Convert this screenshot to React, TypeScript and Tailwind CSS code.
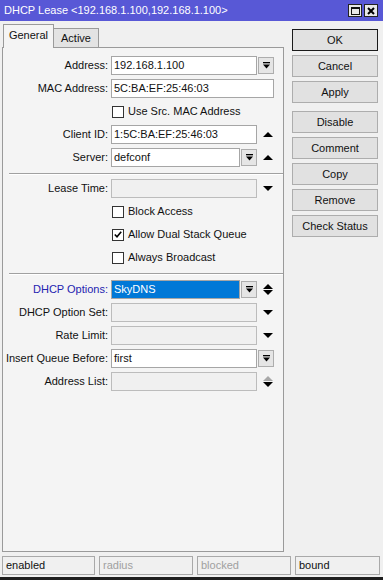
import React from 'react';

type ArrowKind = 'up' | 'down' | 'updown' | 'updownGray';

function Arrow({ kind }: { kind: ArrowKind }) {
  return (
    <div className="ml-[4px] flex w-[14px] justify-center">
      {kind === 'up' && (
        <svg width="10" height="5" viewBox="0 0 10 5">
          <polygon points="0,5 5,0 10,5" fill="#000" />
        </svg>
      )}
      {kind === 'down' && (
        <svg width="10" height="5" viewBox="0 0 10 5">
          <polygon points="0,0 10,0 5,5" fill="#000" />
        </svg>
      )}
      {(kind === 'updown' || kind === 'updownGray') && (
        <svg width="10" height="11" viewBox="0 0 10 11">
          <polygon points="0,5 5,0 10,5" fill={kind === 'updownGray' ? '#a8a8a8' : '#000'} />
          <polygon points="0,6 10,6 5,11" fill="#000" />
        </svg>
      )}
    </div>
  );
}

function DropBtn() {
  return (
    <div className="ml-[1px] flex h-[17px] w-[16px] items-center justify-center border border-[#adadad] bg-[#e5e5e5]">
      <svg width="7" height="7" viewBox="0 0 7 7">
        <rect x="0" y="0" width="7" height="1.3" fill="#000" />
        <polygon points="0,2.5 7,2.5 3.5,6.5" fill="#000" />
      </svg>
    </div>
  );
}

function Field({
  w,
  value,
  disabled,
  selected,
}: {
  w: string;
  value?: string;
  disabled?: boolean;
  selected?: boolean;
}) {
  return (
    <div
      className={`${w} h-[19px] border ${
        disabled ? 'border-[#bcbcbc] bg-[#f0f0f0]' : 'border-[#a6a6a6] bg-white'
      }`}
    >
      <div
        className={`h-full px-[2px] leading-[17px] ${selected ? 'bg-[#0078d7] text-white' : ''}`}
      >
        {value}
      </div>
    </div>
  );
}

function Row({ label, blue, children }: { label: string; blue?: boolean; children: React.ReactNode }) {
  return (
    <div className="flex h-[19px] items-center">
      <div className={`w-[105px] whitespace-nowrap text-right ${blue ? 'text-[#2323b0]' : ''}`}>{label}</div>
      <div className="ml-[3px] flex items-center">{children}</div>
    </div>
  );
}

function Check({ label, checked }: { label: string; checked?: boolean }) {
  return (
    <div className="flex h-[19px] items-center pl-[109px]">
      <div className="flex h-[12px] w-[12px] items-center justify-center border border-[#333] bg-white">
        {checked && (
          <svg width="8" height="7" viewBox="0 0 8 7">
            <polyline points="0.8,3.5 3,5.8 7.2,0.8" fill="none" stroke="#000" strokeWidth="1.6" />
          </svg>
        )}
      </div>
      <span className="ml-[4px]">{label}</span>
    </div>
  );
}

function Separator() {
  return <div className="ml-[6px] border-t border-b border-t-[#a0a0a0] border-b-white" />;
}

function SideButton({ label, primary }: { label: string; primary?: boolean }) {
  return (
    <div
      className={`flex h-[22px] items-center justify-center border bg-[#e1e1e1] ${
        primary ? 'border-[#1a1a1a]' : 'border-[#adadad]'
      }`}
    >
      {label}
    </div>
  );
}

export default function App() {
  return (
    <div className="flex h-[580px] w-[383px] flex-col bg-[#f0f0f0] font-['Liberation_Sans',Arial,sans-serif] text-[11px] text-[#111]">
      {/* title bar */}
      <div className="flex h-[21px] items-center bg-[#5858d6] pl-[4px] pr-[5px]">
        <span className="text-[11px] text-white">DHCP Lease &lt;192.168.1.100,192.168.1.100&gt;</span>
        <div className="ml-auto flex gap-[2px]">
          <div className="flex h-[13px] w-[14px] items-center justify-center border border-[#222] bg-[#e8e8e8]">
            <div className="h-[8px] w-[9px] border border-[#111] border-t-2" />
          </div>
          <div className="flex h-[13px] w-[14px] items-center justify-center border border-[#222] bg-[#e8e8e8]">
            <svg width="8" height="8" viewBox="0 0 8 8">
              <path d="M1 1 L7 7 M7 1 L1 7" stroke="#000" strokeWidth="2" />
            </svg>
          </div>
        </div>
      </div>

      {/* body */}
      <div className="flex pl-[2px] pt-[3px]">
        <div className="flex w-[282px] flex-col">
          <div className="flex h-[23px] items-end pl-[1px]">
            <div className="relative z-10 -mb-px flex h-[24px] w-[51px] items-center justify-center border border-b-0 border-[#9a9a9a] bg-[#f4f4f4] pb-[2px]">
              General
            </div>
            <div className="flex h-[19px] w-[45px] items-center justify-center border border-b-0 border-l-0 border-[#9a9a9a] bg-[#e3e3e3]">
              Active
            </div>
          </div>
          <div className="flex h-[505px] flex-col border border-[#9a9a9a] bg-[#f4f4f4] pt-[8px]">
            <div className="flex flex-col gap-[4px]">
              <Row label="Address:">
                <Field w="w-[146px]" value="192.168.1.100" />
                <DropBtn />
              </Row>
              <Row label="MAC Address:">
                <Field w="w-[163px]" value="5C:BA:EF:25:46:03" />
              </Row>
              <Check label="Use Src. MAC Address" />
              <Row label="Client ID:">
                <Field w="w-[146px]" value="1:5C:BA:EF:25:46:03" />
                <Arrow kind="up" />
              </Row>
              <Row label="Server:">
                <Field w="w-[129px]" value="defconf" />
                <DropBtn />
                <Arrow kind="up" />
              </Row>
            </div>
            <div className="mt-[6px]">
              <Separator />
            </div>
            <div className="mt-[4px] flex flex-col gap-[4px]">
              <Row label="Lease Time:">
                <Field w="w-[146px]" disabled />
                <Arrow kind="down" />
              </Row>
              <Check label="Block Access" />
              <Check label="Allow Dual Stack Queue" checked />
              <Check label="Always Broadcast" />
            </div>
            <div className="mt-[6px]">
              <Separator />
            </div>
            <div className="mt-[5px] flex flex-col gap-[4px]">
              <Row label="DHCP Options:" blue>
                <Field w="w-[129px]" value="SkyDNS" selected />
                <DropBtn />
                <Arrow kind="updown" />
              </Row>
              <Row label="DHCP Option Set:">
                <Field w="w-[146px]" disabled />
                <Arrow kind="down" />
              </Row>
              <Row label="Rate Limit:">
                <Field w="w-[146px]" disabled />
                <Arrow kind="down" />
              </Row>
              <Row label="Insert Queue Before:">
                <Field w="w-[146px]" value="first" />
                <DropBtn />
              </Row>
              <Row label="Address List:">
                <Field w="w-[146px]" disabled />
                <Arrow kind="updownGray" />
              </Row>
            </div>
          </div>
        </div>

        <div className="ml-[8px] flex w-[86px] flex-col gap-[4px] pt-[5px]">
          <SideButton label="OK" primary />
          <SideButton label="Cancel" />
          <SideButton label="Apply" />
          <div className="mt-[4px]">
            <SideButton label="Disable" />
          </div>
          <SideButton label="Comment" />
          <SideButton label="Copy" />
          <SideButton label="Remove" />
          <SideButton label="Check Status" />
        </div>
      </div>

      {/* status bar */}
      <div className="mt-[4px] flex h-[19px] gap-[4px] pl-[2px]">
        <div className="flex w-[93px] items-center border border-[#a9a9a9] pl-[3px]">enabled</div>
        <div className="flex w-[94px] items-center border border-[#a9a9a9] pl-[3px] text-[#a0a0a0]">radius</div>
        <div className="flex w-[94px] items-center border border-[#a9a9a9] pl-[3px] text-[#a0a0a0]">blocked</div>
        <div className="flex w-[85px] items-center border border-[#a9a9a9] pl-[3px]">bound</div>
      </div>
      <div className="mt-[2px] h-[3px] bg-[#1e1e1e]" />
    </div>
  );
}
